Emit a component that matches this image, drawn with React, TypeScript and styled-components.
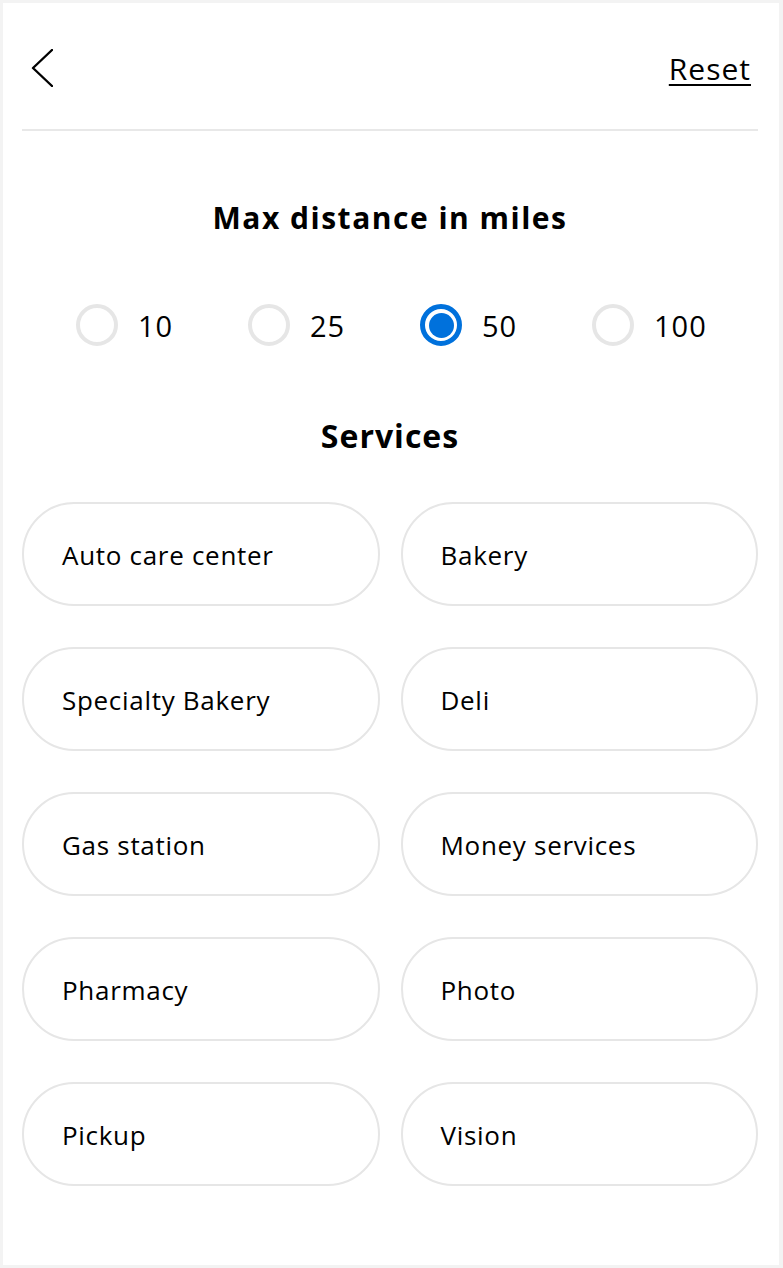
import React, { useState } from "react";
import styled, { createGlobalStyle } from "styled-components";

const GlobalStyle = createGlobalStyle`
  html, body {
    margin: 0;
    padding: 0;
    background: #f3f3f3;
  }
  body {
    font-family: "Open Sans", Lato, "Liberation Sans", sans-serif;
    color: #000;
  }
  * { box-sizing: border-box; }
`;

const Page = styled.div`
  padding: 3px 4px 3px 3px;
  width: 783px;
  height: 1268px;
`;

const Card = styled.div`
  background: #ffffff;
  height: 1262px;
  padding: 0 21px 0 19px;
  display: flex;
  flex-direction: column;
`;

const Header = styled.header`
  height: 128px;
  display: flex;
  align-items: center;
  justify-content: space-between;
  padding: 4px 7px 0 9px;
  border-bottom: 2px solid #e8e8e8;
`;

const BackButton = styled.button`
  border: none;
  background: none;
  padding: 0;
  width: 24px;
  height: 40px;
  display: flex;
  align-items: center;
  cursor: pointer;
`;

const ResetLink = styled.a`
  font-size: 30px;
  letter-spacing: 1px;
  color: #000;
  text-decoration: underline;
  text-underline-offset: 4px;
  text-decoration-thickness: 2px;
  line-height: 40px;
  margin-top: 2px;
  cursor: pointer;
`;

const SectionTitle = styled.h2<{ $size: number; $top: number; $spacing: number }>`
  margin: ${(p) => p.$top}px 0 0;
  text-align: center;
  font-size: ${(p) => p.$size}px;
  letter-spacing: ${(p) => p.$spacing}px;
  font-weight: 700;
  line-height: 40px;
  color: #000;
`;

const RadioRow = styled.div`
  margin-top: 66px;
  display: grid;
  grid-template-columns: repeat(4, 172px);
  padding-left: 54px;
  height: 42px;
`;

const RadioOption = styled.label`
  display: flex;
  align-items: center;
  gap: 20px;
  cursor: pointer;
  font-size: 29px;
  letter-spacing: 1px;
`;

const RadioCircle = styled.span<{ $checked: boolean }>`
  width: 42px;
  height: 42px;
  border-radius: 50%;
  border: ${(p) => (p.$checked ? "5px solid #0071dc" : "4px solid #e6e6e6")};
  display: flex;
  align-items: center;
  justify-content: center;
  flex-shrink: 0;
  &::after {
    content: "";
    display: ${(p) => (p.$checked ? "block" : "none")};
    width: 25px;
    height: 25px;
    border-radius: 50%;
    background: #0071dc;
  }
`;

const ChipGrid = styled.div`
  margin-top: 46px;
  display: grid;
  grid-template-columns: 1fr 1fr;
  column-gap: 21px;
  row-gap: 41px;
`;

const Chip = styled.button`
  height: 104px;
  border-radius: 52px;
  border: 2px solid #e6e6e6;
  background: #fff;
  text-align: left;
  padding: 2px 0 0 38px;
  font-family: inherit;
  font-size: 26px;
  letter-spacing: 0.7px;
  color: #000;
  cursor: pointer;
`;

const distances = ["10", "25", "50", "100"];
const services = [
  "Auto care center",
  "Bakery",
  "Specialty Bakery",
  "Deli",
  "Gas station",
  "Money services",
  "Pharmacy",
  "Photo",
  "Pickup",
  "Vision",
];

export default function App() {
  const [distance, setDistance] = useState("50");
  return (
    <>
      <GlobalStyle />
      <Page>
        <Card>
          <Header>
            <BackButton aria-label="Back">
              <svg width="22" height="38" viewBox="0 0 22 38" fill="none">
                <path
                  d="M21 1 L2 19 L21 37"
                  stroke="#000"
                  strokeWidth="2.4"
                  strokeLinecap="round"
                  strokeLinejoin="round"
                />
              </svg>
            </BackButton>
            <ResetLink>Reset</ResetLink>
          </Header>
          <SectionTitle $size={30} $top={67} $spacing={1.5}>
            Max distance in miles
          </SectionTitle>
          <RadioRow>
            {distances.map((d) => (
              <RadioOption key={d} onClick={() => setDistance(d)}>
                <RadioCircle $checked={distance === d} />
                {d}
              </RadioOption>
            ))}
          </RadioRow>
          <SectionTitle $size={32} $top={70} $spacing={1}>
            Services
          </SectionTitle>
          <ChipGrid>
            {services.map((s) => (
              <Chip key={s}>{s}</Chip>
            ))}
          </ChipGrid>
        </Card>
      </Page>
    </>
  );
}
